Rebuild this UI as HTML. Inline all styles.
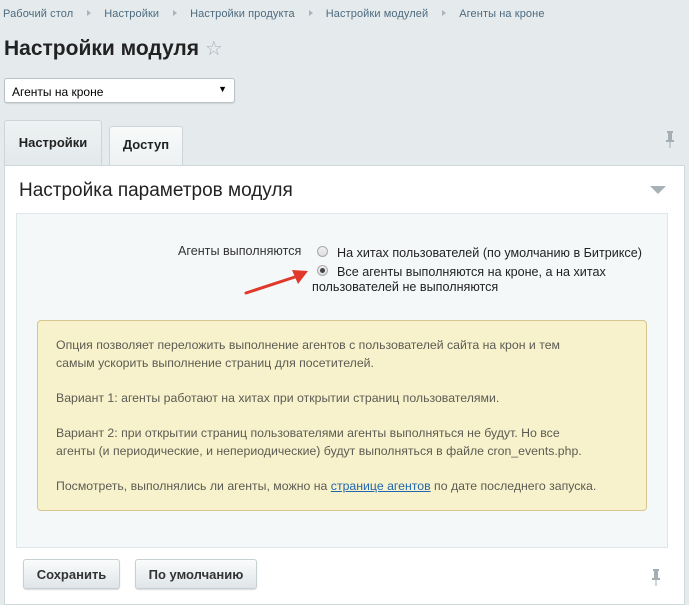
<!DOCTYPE html>
<html><head><meta charset="utf-8"><style>
*{margin:0;padding:0;box-sizing:border-box}
body{width:689px;height:600px;overflow:hidden;background:#e5ebed;font-family:"Liberation Sans",sans-serif;color:#000;position:relative}
.a{position:absolute}
.bc{top:8px;left:3px;font-size:11px;color:#4d6a7f;white-space:nowrap;letter-spacing:0.1px}
.bc span.s{display:inline-block;width:0;height:0;border-left:4px solid #a8b5bd;border-top:3px solid transparent;border-bottom:3px solid transparent;margin:0 13px 1px 14px}
h1{position:absolute;top:36px;left:4px;font-size:21px;font-weight:bold;color:#222;letter-spacing:0}
.sel{top:78px;left:4px;width:231px;height:25px;background:#fff;border:1px solid #b9c2c6;border-radius:3px;font-size:12px;padding:6px 7px;box-shadow:0 1px 1px rgba(0,0,0,.1)}
.tab{font-size:13px;font-weight:bold;color:#222;border:1px solid #cdd5d8;border-bottom:none;border-radius:3px 3px 0 0;text-align:center}
.panel{top:165px;left:4px;width:681px;height:440px;background:#fff;border:1px solid #cfd8db}
.inner{top:213px;left:16px;width:652px;height:335px;background:#f5f8f9;border:1px solid #dde6e9}
.y{top:320px;left:37px;width:610px;height:191px;background:#f7f1cc;border:1px solid #d6c58c;border-radius:4px;font-size:12.3px;color:#5c5c52;line-height:18px;padding:15px 60px 15px 18px}
.y p{margin-bottom:17px}
.btn{top:559px;height:30px;font-size:13px;font-weight:bold;color:#333;background:linear-gradient(#fbfcfc,#dfe5e8);border:1px solid #c7d0d3;border-radius:3px;text-align:center;padding-top:7px;box-shadow:0 1px 1px rgba(0,0,0,.15)}
.r{width:11px;height:11px;border-radius:50%;border:1px solid #a9a9a9;background:linear-gradient(#f0f0f0,#dcdcdc)}
</style></head><body>
<div class="a bc">Рабочий стол<span class="s"></span>Настройки<span class="s"></span>Настройки продукта<span class="s"></span>Настройки модулей<span class="s"></span>Агенты на кроне</div>
<h1>Настройки модуля <span style="color:#a7b0b5;font-weight:normal;font-size:20px">☆</span></h1>
<div class="a sel">Агенты на кроне<span style="position:absolute;right:7px;top:5px;font-size:9px">▼</span></div>
<div class="a tab" style="top:120px;left:4px;width:98px;height:46px;background:linear-gradient(#eef2f3,#e3e9eb);padding-top:14px">Настройки</div>
<div class="a tab" style="top:126px;left:109px;width:74px;height:40px;background:linear-gradient(#f8fafa,#edf1f2);padding-top:10px;font-weight:bold">Доступ</div>
<div class="a" style="top:131px;left:665px">
<svg width="10" height="18"><rect x="2" y="0" width="6" height="2" fill="#a5aeb2"/><rect x="3" y="2" width="4" height="7" fill="#a5aeb2"/><rect x="1" y="9" width="8" height="2" fill="#a5aeb2"/><rect x="4.5" y="11" width="1" height="6" fill="#a5aeb2"/></svg></div>
<div class="a panel"></div>
<div class="a" style="top:180px;left:19px;font-size:19px;color:#222">Настройка параметров модуля</div>
<div class="a" style="top:186px;left:650px;width:0;height:0;border-left:8px solid transparent;border-right:8px solid transparent;border-top:8px solid #a8b1b5"></div>
<div class="a inner"></div>
<div class="a" style="top:244px;left:178px;font-size:12.6px;color:#333">Агенты выполняются</div>
<div class="a r" style="top:246px;left:317px"></div>
<div class="a r" style="top:265px;left:317px"><div style="width:5px;height:5px;border-radius:50%;background:#444;margin:2px"></div></div>
<div class="a" style="top:246px;left:337px;font-size:12.6px;color:#222">На хитах пользователей (по умолчанию в Битриксе)</div>
<div class="a" style="top:265px;left:312px;width:330px;font-size:12.6px;color:#222;line-height:15px;text-indent:25px">Все агенты выполняются на кроне, а на хитах пользователей не выполняются</div>
<svg class="a" style="top:262px;left:240px" width="75" height="35"><line x1="6" y1="31" x2="58" y2="14" stroke="#e0392b" stroke-width="3" stroke-linecap="round"/><polygon points="68,9 52,8 58,22" fill="#e0392b"/></svg>
<div class="a y"><p>Опция позволяет переложить выполнение агентов с пользователей сайта на крон и тем самым ускорить выполнение страниц для посетителей.</p><p>Вариант 1: агенты работают на хитах при открытии страниц пользователями.</p><p>Вариант 2: при открытии страниц пользователями агенты выполняться не будут. Но все агенты (и периодические, и непериодические) будут выполняться в файле cron_events.php.</p><p style="white-space:nowrap">Посмотреть, выполнялись ли агенты, можно на <a style="color:#2067b0;text-decoration:underline">странице агентов</a> по дате последнего запуска.</p></div>
<div class="a btn" style="left:23px;width:97px">Сохранить</div>
<div class="a btn" style="left:135px;width:122px">По умолчанию</div>
<div class="a" style="top:569px;left:651px"><svg width="10" height="18"><rect x="2" y="0" width="6" height="2" fill="#a5aeb2"/><rect x="3" y="2" width="4" height="7" fill="#a5aeb2"/><rect x="1" y="9" width="8" height="2" fill="#a5aeb2"/><rect x="4.5" y="11" width="1" height="6" fill="#a5aeb2"/></svg></div>
</body></html>
